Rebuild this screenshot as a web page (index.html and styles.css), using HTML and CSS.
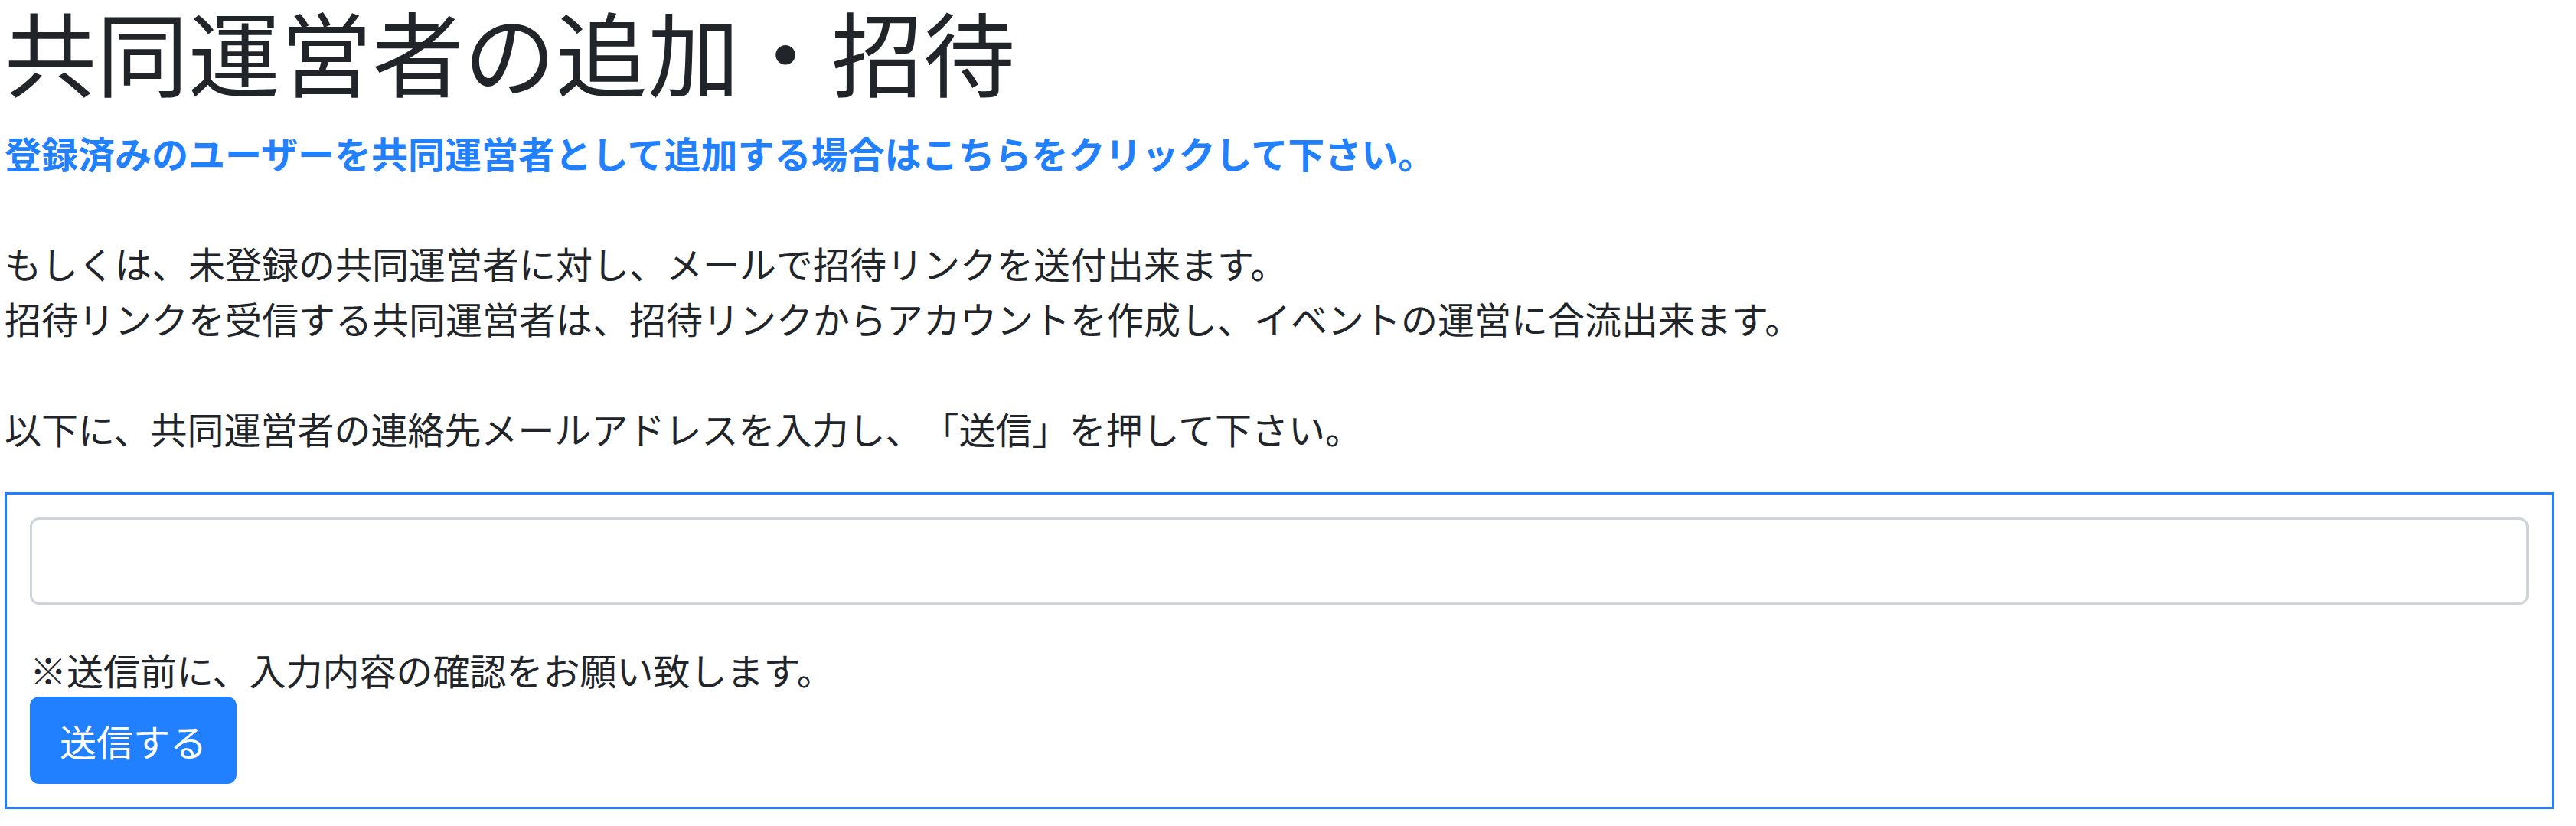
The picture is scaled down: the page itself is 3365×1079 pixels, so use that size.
FILE: index.html
```html
<!DOCTYPE html>
<html lang="ja">
<head>
<meta charset="utf-8">
<title>共同運営者の追加・招待</title>
<link rel="stylesheet" href="styles.css">
</head>
<body>
<main class="page">
  <h1 class="title">共同運営者の追加・招待</h1>
  <p class="intro">
    <a class="add-link" href="#">登録済みのユーザーを共同運営者として追加する場合はこちらをクリックして下さい。</a><br><br>
    もしくは、未登録の共同運営者に対し、メールで招待リンクを送付出来ます。<br>
    招待リンクを受信する共同運営者は、招待リンクからアカウントを作成し、イベントの運営に合流出来ます。<br><br>
    以下に、共同運営者の連絡先メールアドレスを入力し、「送信」を押して下さい。
  </p>
  <form class="invite-box">
    <div class="form-group">
      <input class="form-control" type="email" name="email">
    </div>
    <p class="note">※送信前に、入力内容の確認をお願い致します。</p>
    <button class="btn-primary" type="button">送信する</button>
  </form>
</main>
</body>
</html>
```
FILE: styles.css
```css
html, body {
  margin: 0;
  padding: 0;
  background: #ffffff;
}
body {
  font-family: "Noto Sans CJK JP", "Noto Sans", sans-serif;
  font-size: 48px;
  line-height: 72px;
  color: #212529;
  text-spacing-trim: space-all;
}
.page {
  padding: 0 29px 0 6px;
}
.title {
  margin: 0 0 31px 0;
  font-size: 120px;
  font-weight: 400;
  line-height: 132px;
}
.intro {
  margin: 0 0 48px 0;
}
.add-link {
  color: #2080ff;
  font-weight: 700;
  text-decoration: none;
}
.invite-box {
  border: 3px solid #2080ff;
  padding: 30px;
  margin: 0;
}
.form-group {
  margin-bottom: 48px;
}
.form-control {
  display: block;
  box-sizing: border-box;
  width: 100%;
  height: 114px;
  margin: 0;
  padding: 18px 36px;
  font: inherit;
  color: #495057;
  background: #fff;
  border: 3px solid #ced4da;
  border-radius: 12px;
  outline: none;
}
.note {
  margin: 0;
}
.btn-primary {
  display: block;
  box-sizing: border-box;
  height: 114px;
  padding: 18px 36px;
  font: inherit;
  line-height: 72px;
  color: #fff;
  background: #2080ff;
  border: 3px solid #2080ff;
  border-radius: 12px;
  cursor: pointer;
}
```
